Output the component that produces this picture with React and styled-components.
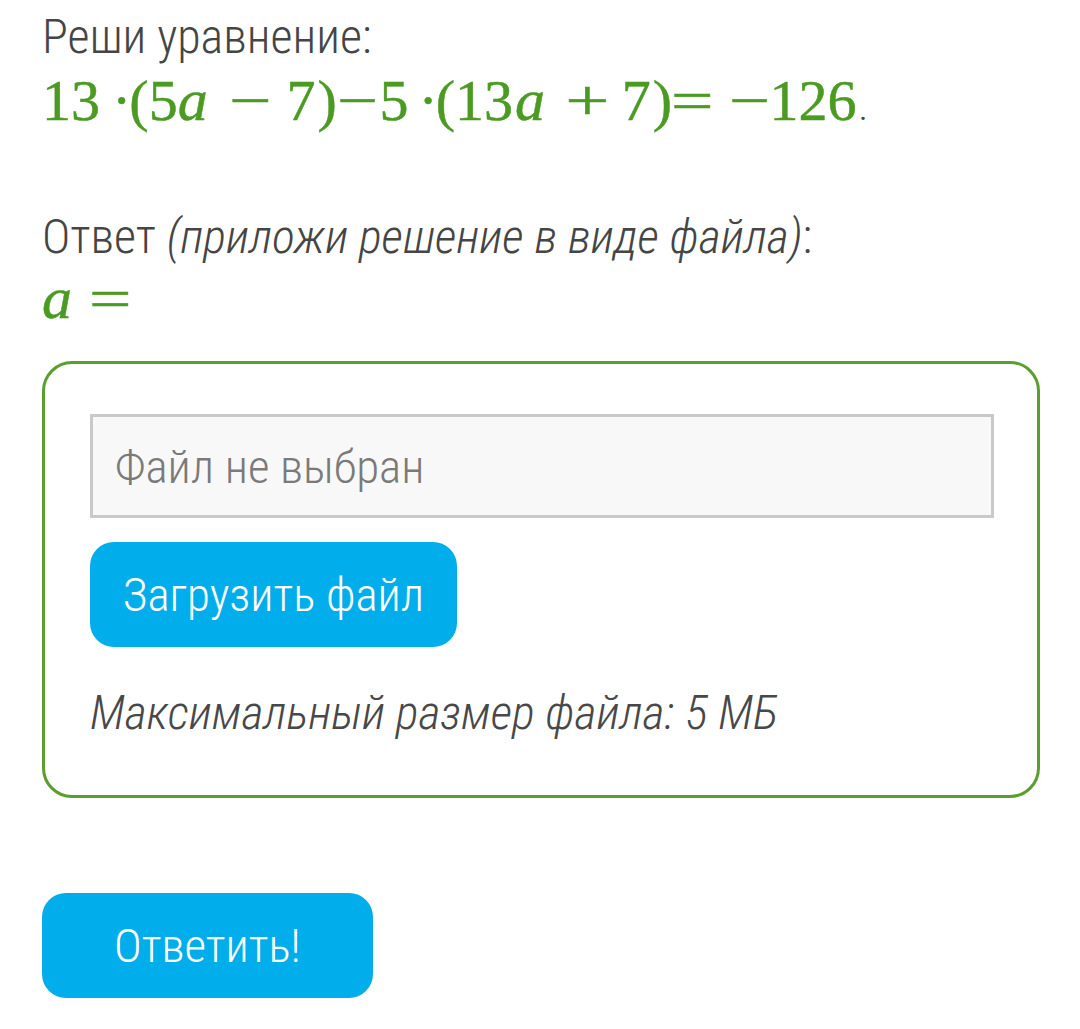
import React from "react";
import styled, { createGlobalStyle } from "styled-components";

const GlobalStyle = createGlobalStyle`
    body {
        margin: 0;
        background: #ffffff;
        font-family: Roboto, "Noto Sans", sans-serif;
        font-weight: 300;
        font-stretch: condensed;
    }
`;

const StyledPage = styled.div`
    display: flex;
    flex-direction: column;
    align-items: flex-start;
    padding: 8px 40px 32px 42px;
`;

const StyledText = styled.p`
    margin: ${(p) => p.$margin || "0"};
    font-size: 48px;
    line-height: 58px;
    color: #454545;

    & em {
        font-style: italic;
    }
`;

const StyledMath = styled.div`
    margin: ${(p) => p.$margin || "0"};
    font-family: "Liberation Serif", "DejaVu Serif", serif;
    font-size: 58px;
    line-height: 64px;
    color: #4b9a22;
    -webkit-text-stroke: 0.5px #4b9a22;
    white-space: nowrap;
`;

const StyledVar = styled.i`
    font-style: italic;
    font-size: 60px;
    margin: 0 ${(p) => p.$r ?? 4}px 0 ${(p) => p.$l ?? 0}px;
`;

const StyledOp = styled.span`
    display: inline-block;
    margin: 0 ${(p) => p.$r ?? 0}px 0 ${(p) => p.$l ?? 0}px;
    transform: scaleX(${(p) => p.$sx || 1});
`;

const StyledParen = styled.span`
    margin-left: ${(p) => p.$l ?? 0}px;
`;

const StyledPeriod = styled.span`
    font-family: Roboto, sans-serif;
    font-size: 40px;
    color: #444444;
    -webkit-text-stroke: 0;
    margin-left: 2px;
`;

const StyledBox = styled.div`
    box-sizing: border-box;
    width: 998px;
    margin-top: 30px;
    padding: 50px 45px 53px 45px;
    border: 3px solid #5a9e2d;
    border-radius: 30px;
    display: flex;
    flex-direction: column;
    align-items: flex-start;
`;

const StyledFile = styled.div`
    box-sizing: border-box;
    width: 904px;
    height: 104px;
    padding-left: 22px;
    display: flex;
    align-items: center;
    background: #f8f8f8;
    border: 3px solid #c9c9c9;
    font-size: 47px;
    color: #7a7a7a;
`;

const StyledButton = styled.button`
    box-sizing: border-box;
    height: 105px;
    padding: 0 ${(p) => p.$pad || "33px"};
    margin-top: ${(p) => p.$top || "0"};
    border: none;
    border-radius: 24px;
    background: #02adec;
    color: #ffffff;
    font-family: Roboto, sans-serif;
    font-weight: 300;
    font-stretch: condensed;
    font-size: 47px;
`;

const StyledNote = styled.p`
    margin: 37px 0 0 0;
    font-size: 48px;
    line-height: 58px;
    font-style: italic;
    color: #484848;
`;

const App = () => {
    return (
        <>
            <GlobalStyle />
            <StyledPage>
                <StyledText>Реши уравнение:</StyledText>
                <StyledMath $margin="2px 0 0 0">
                    13
                    <StyledOp $l={12} $r={-2}>·</StyledOp>
                    (5
                    <StyledVar>a</StyledVar>
                    <StyledOp $l={22} $r={20} $sx={1.3}>−</StyledOp>
                    7<StyledParen $l={2}>)</StyledParen>
                    <StyledOp $l={4} $r={6} $sx={1.25}>−</StyledOp>
                    5
                    <StyledOp $l={10} $r={-2}>·</StyledOp>
                    (13
                    <StyledVar $l={2}>a</StyledVar>
                    <StyledOp $l={22} $r={18} $sx={1.35}>+</StyledOp>
                    7<StyledParen $l={2}>)</StyledParen>
                    <StyledOp $l={4} $r={0} $sx={1.3}>=</StyledOp>
                    <StyledOp $l={24} $r={4} $sx={1.25}>−</StyledOp>
                    126
                    <StyledPeriod>.</StyledPeriod>
                </StyledMath>
                <StyledText $margin="69px 0 0 0">
                    Ответ <em>(приложи решение в виде файла)</em>:
                </StyledText>
                <StyledMath>
                    <StyledVar $r={0}>a</StyledVar>
                    <StyledOp $l={22} $sx={1.3}>=</StyledOp>
                </StyledMath>
                <StyledBox>
                    <StyledFile>Файл не выбран</StyledFile>
                    <StyledButton $top="24px">Загрузить файл</StyledButton>
                    <StyledNote>Максимальный размер файла: 5 МБ</StyledNote>
                </StyledBox>
                <StyledButton $top="95px" $pad="72px">
                    Ответить!
                </StyledButton>
            </StyledPage>
        </>
    );
};

export default App;
